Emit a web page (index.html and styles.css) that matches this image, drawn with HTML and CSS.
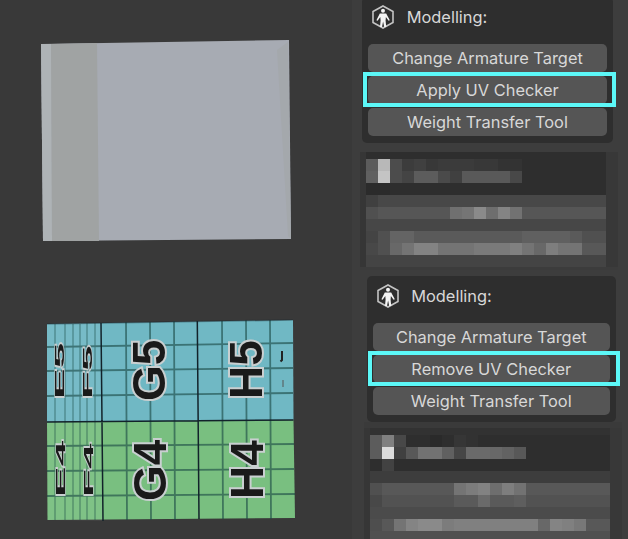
FILE: index.html
```html
<!DOCTYPE html>
<html lang="en">
<head>
    <meta charset="UTF-8">
    <title>Apply UV Checker</title>
    <link rel="stylesheet" href="styles.css">
</head>
<body>
    <div class="shot shot-top">
        <svg class="viewport" viewBox="0 0 352 270" width="352" height="270">
            <g class="soft">
                <polygon points="41,44 289,40 291,239 43,241" fill="#a7abb3"/>
                <polygon points="41,44 51,44 52,241 43,241" fill="#aeb3b6"/>
                <polygon points="51,44 97,43 99,241 52,241" fill="#a0a3a3"/>
                <polygon points="277,50 288,42 291,239 288,236" fill="#a4a8ac"/>
            </g>
        </svg>
        <div class="sidebar">
            <section class="panel">
                <header class="panel-head">
                    <svg class="rig-icon" viewBox="0 0 22 24" width="22" height="24">
                        <polygon points="11,1 21,6.5 21,17.5 11,23 1,17.5 1,6.5" fill="none" stroke="#c4c4c4" stroke-width="1.6"/>
                        <circle cx="11" cy="5.8" r="2" fill="#f4f4f4"/>
                        <path d="M7.8 8.600h6.400l3.600 6.600-1.200.6-2.700-3.800-.3 3.600.6 6.400h-2l-1.100-5.600-1.100 5.600h-2l.6-6.400-.3-3.600-2.700 3.800-1.200-.6z" fill="#f4f4f4"/>
                    </svg>
                    <span>Modelling:</span>
                </header>
                <div class="btn">Change Armature Target</div>
                <div class="btn marked">Apply UV Checker</div>
                <div class="btn">Weight Transfer Tool</div>
            </section>
            <svg class="mosaic" viewBox="0 0 258 118" width="258" height="118" shape-rendering="crispEdges">
                <rect width="258" height="118" fill="#2e2e2e"/>
                <rect x="0" y="0" width="6" height="118" fill="#363636"/>
                <rect x="246" y="0" width="12" height="118" fill="#383838"/>
                <rect x="0" y="115" width="258" height="3" fill="#3c3c3c"/>
                <g transform="translate(6 7)">
                    <rect x="0" width="12" height="12" fill="#5c5c5c"/><rect x="12" width="12" height="12" fill="#b8b8b8"/><rect x="24" width="12" height="12" fill="#4c4c4c"/><rect x="36" width="12" height="12" fill="#3c3c3c"/><rect x="48" width="12" height="12" fill="#404040"/><rect x="60" width="12" height="12" fill="#383838"/><rect x="72" width="36" height="12" fill="#3b3b3b"/><rect x="108" width="24" height="12" fill="#383838"/><rect x="132" width="24" height="12" fill="#333333"/>
                    <g transform="translate(0 12)">
                        <rect x="0" width="12" height="12" fill="#606060"/><rect x="12" width="12" height="12" fill="#c4c4c4"/><rect x="24" width="12" height="12" fill="#4c4c4c"/><rect x="36" width="12" height="12" fill="#444444"/><rect x="48" width="24" height="12" fill="#5c5c5c"/><rect x="72" width="12" height="12" fill="#4a4a4a"/><rect x="84" width="12" height="12" fill="#404040"/><rect x="96" width="48" height="12" fill="#595959"/><rect x="144" width="12" height="12" fill="#484848"/>
                    </g>
                    <rect y="24" x="0" width="24" height="12" fill="#2b2b2b"/>
                    <rect y="36" width="240" height="12" fill="#484848"/><rect y="36" width="12" height="12" fill="#404040"/>
                    <g transform="translate(0 48)">
                        <rect width="240" height="12" fill="#565656"/><rect x="0" width="12" height="12" fill="#505050"/><rect x="84" width="12" height="12" fill="#707070"/><rect x="96" width="12" height="12" fill="#757575"/><rect x="108" width="12" height="12" fill="#8a8a8a"/><rect x="120" width="12" height="12" fill="#6e6e6e"/><rect x="132" width="12" height="12" fill="#848484"/><rect x="144" width="12" height="12" fill="#727272"/>
                    </g>
                    <rect y="60" width="240" height="12" fill="#474747"/>
                    <g transform="translate(0 72)">
                        <rect width="240" height="12" fill="#5a5a5a"/><rect x="0" width="12" height="12" fill="#444444"/><rect x="12" width="12" height="12" fill="#505050"/><rect x="24" width="24" height="12" fill="#646464"/><rect x="156" width="48" height="12" fill="#606060"/><rect x="216" width="24" height="12" fill="#505050"/>
                    </g>
                    <g transform="translate(0 84)">
                        <rect width="240" height="12" fill="#747474"/><rect x="0" width="12" height="12" fill="#484848"/><rect x="12" width="12" height="12" fill="#505050"/><rect x="24" width="12" height="12" fill="#686868"/><rect x="48" width="24" height="12" fill="#838383"/><rect x="108" width="36" height="12" fill="#7a7a7a"/><rect x="144" width="12" height="12" fill="#808080"/><rect x="168" width="12" height="12" fill="#686868"/><rect x="180" width="12" height="12" fill="#7e7e7e"/><rect x="216" width="24" height="12" fill="#585858"/>
                    </g>
                    <rect y="96" width="240" height="12" fill="#444444"/>
                </g>
            </svg>
        </div>
    </div>

    <div class="shot shot-bottom">
        <svg class="viewport" viewBox="0 0 352 269" width="352" height="269">
            <g class="soft" transform="translate(0 -270)">
                <polygon points="47,324 293,320 293.500,420 47,422" fill="#70b8c4"/>
                <polygon points="47,422 293.500,420 295,518 47.500,520" fill="#79bf80"/>
                <polygon points="47,324 101,323 103,521 47.500,520" fill="#ffffff" opacity=".05"/>
                <g stroke="#1c4a46" fill="none" stroke-width="1.800" opacity=".62">
                    <path d="M47 347 293 343M47 371 293 368M47 396 293 393M47 446 294 444M47 471 294 469M47 496 295 494"/>
                    <path d="M126 322 127 520M150 322 151 520M174 321 175 520M222 321 223 519M246 320 247 519M270 320 271 519"/>
                    <path d="M55 324 55 520M65 324 65 520M73 324 73 520M80 324 80 520M87 323 87 520M95 323 95 520" opacity=".55"/>
                </g>
                <g stroke="#12222a" fill="none" stroke-width="1.500">
                    <path d="M47 422 293.500 420M101 323 103 521M197.300 321 199 519"/>
                    <path d="M47 324 293 320" opacity=".35"/>
                </g>
                <text class="grid-label" transform="translate(165 401) rotate(-90)">G5</text>
                <text class="grid-label" transform="translate(262 399) rotate(-90)">H5</text>
                <text class="grid-label" transform="translate(166 501) rotate(-90)">G4</text>
                <text class="grid-label" transform="translate(263 499) rotate(-90)">H4</text>
                <text class="grid-label" transform="translate(64 399) rotate(-90) scale(1 .27)">E5</text>
                <text class="grid-label" transform="translate(92 399) rotate(-90) scale(1 .27)">F5</text>
                <text class="grid-label" transform="translate(65 497) rotate(-90) scale(1 .27)">E4</text>
                <text class="grid-label" transform="translate(92.500 497) rotate(-90) scale(1 .27)">F4</text>
                <path d="M282 351v9l-1.500 1.500" stroke="#222" stroke-width="2" fill="none"/>
                <path d="M283 380v7" stroke="#555" stroke-width="1" fill="none"/>
            </g>
        </svg>
        <div class="sidebar">
            <section class="panel">
                <header class="panel-head">
                    <svg class="rig-icon" viewBox="0 0 22 24" width="22" height="24">
                        <polygon points="11,1 21,6.5 21,17.5 11,23 1,17.5 1,6.5" fill="none" stroke="#c4c4c4" stroke-width="1.6"/>
                        <circle cx="11" cy="5.8" r="2" fill="#f4f4f4"/>
                        <path d="M7.8 8.600h6.400l3.600 6.600-1.200.6-2.700-3.800-.3 3.600.6 6.400h-2l-1.100-5.600-1.100 5.600h-2l.6-6.400-.3-3.600-2.700 3.800-1.200-.6z" fill="#f4f4f4"/>
                    </svg>
                    <span>Modelling:</span>
                </header>
                <div class="btn">Change Armature Target</div>
                <div class="btn marked">Remove UV Checker</div>
                <div class="btn">Weight Transfer Tool</div>
            </section>
            <svg class="mosaic" viewBox="0 0 258 117" width="258" height="117" shape-rendering="crispEdges">
                <rect width="258" height="117" fill="#2e2e2e"/>
                <rect x="0" width="6" height="117" fill="#363636"/>
                <rect x="246" width="12" height="117" fill="#383838"/>
                <rect x="0" width="258" height="6" fill="#3a3a3a"/>
                <rect x="6" y="6" width="240" height="7" fill="#323232"/>
                <g transform="translate(6 13)">
                    <rect x="0" width="12" height="12" fill="#5c5c5c"/><rect x="12" width="12" height="12" fill="#808080"/><rect x="24" width="12" height="12" fill="#484848"/><rect x="60" width="12" height="12" fill="#2a2a2a"/><rect x="84" width="12" height="12" fill="#363636"/><rect x="96" width="12" height="12" fill="#323232"/>
                    <g transform="translate(0 12)">
                        <rect x="0" width="12" height="12" fill="#5c5c5c"/><rect x="12" width="12" height="12" fill="#dcdcdc"/><rect x="24" width="12" height="12" fill="#404040"/><rect x="36" width="12" height="12" fill="#585858"/><rect x="48" width="24" height="12" fill="#727272"/><rect x="72" width="12" height="12" fill="#606060"/><rect x="84" width="12" height="12" fill="#464646"/><rect x="96" width="24" height="12" fill="#6a6a6a"/><rect x="120" width="12" height="12" fill="#686868"/><rect x="132" width="12" height="12" fill="#626262"/><rect x="144" width="12" height="12" fill="#585858"/>
                    </g>
                    <rect y="24" x="12" width="12" height="12" fill="#424242"/>
                    <rect y="36" width="240" height="12" fill="#3d3d3d"/>
                    <g transform="translate(0 48)">
                        <rect width="240" height="12" fill="#585858"/><rect x="0" width="12" height="12" fill="#505050"/><rect x="84" width="12" height="12" fill="#747474"/><rect x="96" width="12" height="12" fill="#7c7c7c"/><rect x="108" width="12" height="12" fill="#828282"/><rect x="120" width="12" height="12" fill="#6e6e6e"/><rect x="132" width="12" height="12" fill="#7e7e7e"/><rect x="144" width="12" height="12" fill="#727272"/>
                    </g>
                    <g transform="translate(0 60)">
                        <rect width="240" height="12" fill="#525252"/><rect x="0" width="12" height="12" fill="#484848"/><rect x="84" width="24" height="12" fill="#5a5a5a"/><rect x="108" width="12" height="12" fill="#6a6a6a"/><rect x="120" width="24" height="12" fill="#5a5a5a"/><rect x="144" width="12" height="12" fill="#5e5e5e"/>
                    </g>
                    <rect y="72" width="240" height="12" fill="#4b4b4b"/>
                    <g transform="translate(0 84)">
                        <rect width="240" height="12" fill="#808080"/><rect x="0" width="12" height="12" fill="#4e4e4e"/><rect x="12" width="12" height="12" fill="#585858"/><rect x="24" width="12" height="12" fill="#747474"/><rect x="36" width="12" height="12" fill="#848484"/><rect x="48" width="24" height="12" fill="#8a8a8a"/><rect x="72" width="12" height="12" fill="#7c7c7c"/><rect x="168" width="12" height="12" fill="#686868"/><rect x="180" width="12" height="12" fill="#848484"/><rect x="204" width="12" height="12" fill="#787878"/><rect x="216" width="24" height="12" fill="#585858"/>
                    </g>
                    <rect y="96" width="240" height="12" fill="#505050"/>
                </g>
            </svg>
        </div>
    </div>
</body>
</html>
```

FILE: styles.css
```css
html, body {
    margin: 0;
    padding: 0;
    height: 539px;
    overflow: hidden;
}

body {
    background-color: #3c3c3c;
    font-family: Inter, "Noto Sans", sans-serif;
    color: #d8d8d8;
}

.shot {
    display: flex;
    overflow: hidden;
}

.shot-top {
    height: 270px;
}

.shot-bottom {
    height: 269px;
}

.viewport {
    flex: none;
    display: block;
    background-color: #393939;
}

.sidebar {
    flex: 1;
    min-width: 0;
    background-color: #3d3d3d;
}

.shot-top .panel {
    margin: -3px 15px 9px 10px;
}

.shot-bottom .panel {
    margin: 6px 12px 0 14.5px;
}

.panel {
    box-sizing: border-box;
    height: 146px;
    padding: 0 6px;
    display: flex;
    flex-direction: column;
    gap: 4px;
    background-color: #2e2e2e;
    border-radius: 5px;
}

.panel-head {
    box-sizing: border-box;
    height: 43px;
    display: flex;
    align-items: center;
    gap: 12.7px;
    padding: 0 0 3px 4px;
    font-size: 16.4px;
}

.rig-icon {
    display: block;
    flex: none;
}

.btn {
    position: relative;
    flex: none;
    height: 28px;
    line-height: 28px;
    text-align: center;
    font-size: 16.4px;
    background-color: #555555;
    border-radius: 5px;
}

.marked::after {
    content: '';
    position: absolute;
    top: -4px;
    left: -5px;
    right: -9px;
    bottom: -3px;
    border: 4px solid #5cf8f8;
}

.shot-bottom .marked::after {
    right: -10px;
}

.mosaic {
    display: block;
}

.shot-top .mosaic {
    margin-left: 8px;
}

.shot-bottom .mosaic {
    margin-left: 12px;
}

.soft {
    filter: blur(.5px);
}

.grid-label {
    font-family: "Liberation Sans", Arial, sans-serif;
    font-weight: bold;
    font-size: 46px;
    fill: #1a1a1a;
    stroke: #c9cfd0;
    stroke-width: 4px;
    paint-order: stroke;
}
```
